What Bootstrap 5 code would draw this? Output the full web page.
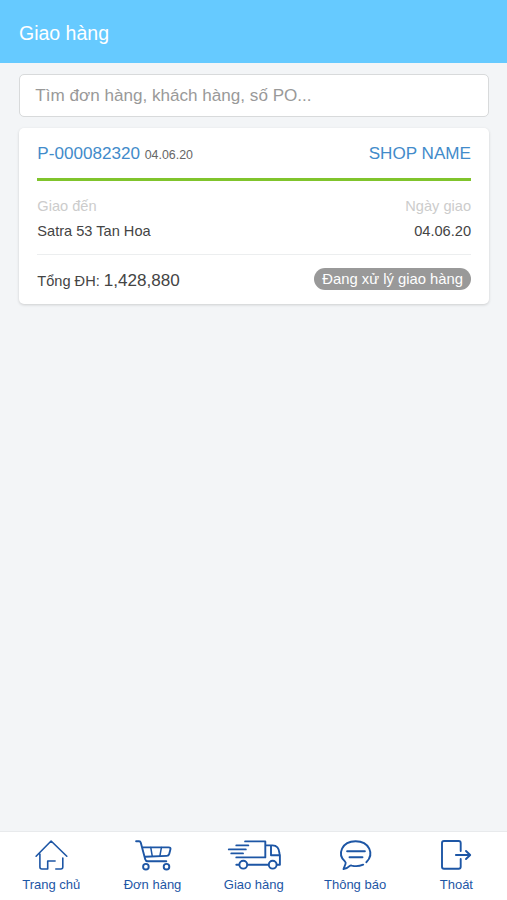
<!DOCTYPE html>
<html lang="vi">
<head>
<meta charset="utf-8">
<meta name="viewport" content="width=device-width, initial-scale=1">
<title>Giao hàng</title>
<link href="https://cdn.jsdelivr.net/npm/bootstrap@5.3.0/dist/css/bootstrap.min.css" rel="stylesheet">
<style>
body{font-family:"Liberation Sans",Arial,sans-serif;background:#f3f5f7;color:#444;line-height:1.2}
.app-bar{height:62.5px;background:#66caff;padding:4px 19.5px 0 19px;font-size:19.5px}
.app-main{padding:11.5px 18px 0 19.3px}
.search-box{height:43px;border:1.5px solid #d8dadb;border-radius:5px;padding:0 15px;font-size:17.1px;color:#444}
.search-box::placeholder{color:#999}
.order-card{margin-top:11px;height:176px;border-radius:5px;padding:0 18px;box-shadow:0 1px 3px rgba(0,0,0,.16)}
.order-head{height:53px;padding-top:2px;border-bottom:3px solid #80c42c;font-size:17.1px;color:#428bca}
.order-date{font-size:12.4px;color:#666}
.order-info{height:74px;padding-top:13px;border-bottom:1px solid #eceeef;font-size:14.6px;line-height:24.5px}
.dim{color:#ccc}
.order-total{height:48px;font-size:14.6px}
.amount{font-size:17.1px}
.status{background:#999;height:22px;font-size:14.8px;padding:0 8px;line-height:22px}
.tabs{height:69px;border-top:1px solid #e8eaec;padding:4px 0 0 .6px;font-size:13px}
.tab-link{color:#1d56a5}
.tab-link svg{width:60px;height:40px;margin-bottom:1px;fill:none;stroke:#1d56a5;stroke-width:1.9;stroke-linecap:round;stroke-linejoin:round}
</style>
<script src="https://cdn.jsdelivr.net/npm/bootstrap@5.3.0/dist/js/bootstrap.bundle.min.js"></script>
</head>
<body class="d-flex flex-column vh-100 overflow-hidden">
<header class="app-bar d-flex align-items-center text-white flex-shrink-0">Giao hàng</header>
<main class="app-main flex-grow-1">
  <input class="search-box form-control" type="text" placeholder="Tìm đơn hàng, khách hàng, số PO..." aria-label="Tìm đơn hàng">
  <article class="order-card bg-white">
    <div class="order-head d-flex align-items-center justify-content-between">
      <div>P-000082320 <span class="order-date">04.06.20</span></div>
      <div>SHOP NAME</div>
    </div>
    <div class="order-info d-flex justify-content-between">
      <div><div class="dim">Giao đến</div><div>Satra 53 Tan Hoa</div></div>
      <div class="text-end"><div class="dim">Ngày giao</div><div>04.06.20</div></div>
    </div>
    <div class="order-total d-flex align-items-center justify-content-between">
      <div class="pt-1">Tổng ĐH: <span class="amount">1,428,880</span></div>
      <span class="status rounded-pill text-white">Đang xử lý giao hàng</span>
    </div>
  </article>
</main>
<nav class="tabs nav nav-fill flex-nowrap bg-white flex-shrink-0">
  <a class="tab-link col d-flex flex-column align-items-center text-decoration-none" href="#">
    <svg viewBox="20.9 836 60 40"><path d="M36 856.2 51 841l15.7 15.2M39.8 854v13q0 2 2 2h5.8v-8H55M62.7 858v9q0 2-2 2h-5" stroke-width="1.6"/></svg>
    <span>Trang chủ</span></a>
  <a class="tab-link col d-flex flex-column align-items-center text-decoration-none" href="#">
    <svg viewBox="122.9 836 60 40"><path d="M136 841.3h3q1.3 0 1.7 1.4l4.4 16.5q.5 2 2.5 2h18.6M142.6 847.4h25.9q2.4 0 1.8 2.2l-1.2 4.4q-.5 1.8-2.5 1.9l-21.7.8"/><path d="m150.7 847.6 1.4 8.2M161.3 847.6l-1.5 8.2" stroke-width="1.5"/><circle cx="145.8" cy="866.7" r="2.8"/><circle cx="166.4" cy="866.7" r="2.8"/></svg>
    <span>Đơn hàng</span></a>
  <a class="tab-link col d-flex flex-column align-items-center text-decoration-none" href="#">
    <svg viewBox="223.7 836 60 40"><path d="M244.8 841.4H265v16h-29M236 845.4h12M228.5 849.4h17M231 853.4h11.7M265 845.4h7.2q6.4 0 7 8l.4 2v9.3h-3M270.7 845.6v9.6h8.8M236 864.7h2.8M247.2 864.7h21"/><circle cx="243" cy="864.7" r="3.9"/><circle cx="272.4" cy="864.7" r="3.9"/></svg>
    <span>Giao hàng</span></a>
  <a class="tab-link col d-flex flex-column align-items-center text-decoration-none" href="#">
    <svg viewBox="325.1 836 60 40"><path d="M366.4 862.2c8.4-8 3-21-10.7-21-13.8 0-18.7 13-10.7 20.2q1.2 1.1.6 2.6l-2 5q3.4-.2 6.3-3.1.8-.7 2-.3 5.7 1.4 11.4-.9M347.2 851.3H365M349.6 857.2h13"/></svg>
    <span>Thông báo</span></a>
  <a class="tab-link col d-flex flex-column align-items-center text-decoration-none" href="#">
    <svg viewBox="426.3 836 60 40"><path d="M461 851v-8q0-2-2-2h-14.7q-2 0-2 2v23.7q0 2 2 2H459q2 0 2-2V859M456.2 855h14M466.3 851l4.2 4-4.2 4"/></svg>
    <span>Thoát</span></a>
</nav>
</body>
</html>
